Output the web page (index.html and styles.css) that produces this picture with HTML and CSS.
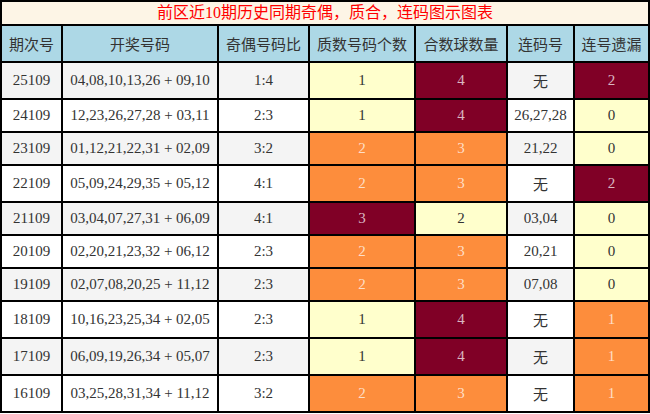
FILE: index.html
```html
<!DOCTYPE html>
<html lang="zh-CN">
<head>
<meta charset="utf-8">
<title>前区近10期历史同期奇偶，质合，连码图示图表</title>
<link rel="stylesheet" href="styles.css">
</head>
<body>
<table class="chart">
  <colgroup>
    <col class="c1"><col class="c2"><col class="c3"><col class="c4"><col class="c5"><col class="c6"><col class="c7">
  </colgroup>
  <thead>
    <tr><th class="title" colspan="7">前区近10期历史同期奇偶，质合，连码图示图表</th></tr>
    <tr class="head">
      <th>期次号</th><th>开奖号码</th><th>奇偶号码比</th><th>质数号码个数</th><th>合数球数量</th><th>连码号</th><th>连号遗漏</th>
    </tr>
  </thead>
  <tbody>
    <tr class="alt"><td>25109</td><td>04,08,10,13,26 + 09,10</td><td>1:4</td><td class="lo">1</td><td class="hi">4</td><td>无</td><td class="hi">2</td></tr>
    <tr><td>24109</td><td>12,23,26,27,28 + 03,11</td><td>2:3</td><td class="lo">1</td><td class="hi">4</td><td>26,27,28</td><td class="lo">0</td></tr>
    <tr class="alt"><td>23109</td><td>01,12,21,22,31 + 02,09</td><td>3:2</td><td class="mid">2</td><td class="mid">3</td><td>21,22</td><td class="lo">0</td></tr>
    <tr><td>22109</td><td>05,09,24,29,35 + 05,12</td><td>4:1</td><td class="mid">2</td><td class="mid">3</td><td>无</td><td class="hi">2</td></tr>
    <tr class="alt"><td>21109</td><td>03,04,07,27,31 + 06,09</td><td>4:1</td><td class="hi">3</td><td class="lo">2</td><td>03,04</td><td class="lo">0</td></tr>
    <tr><td>20109</td><td>02,20,21,23,32 + 06,12</td><td>2:3</td><td class="mid">2</td><td class="mid">3</td><td>20,21</td><td class="lo">0</td></tr>
    <tr class="alt"><td>19109</td><td>02,07,08,20,25 + 11,12</td><td>2:3</td><td class="mid">2</td><td class="mid">3</td><td>07,08</td><td class="lo">0</td></tr>
    <tr><td>18109</td><td>10,16,23,25,34 + 02,05</td><td>2:3</td><td class="lo">1</td><td class="hi">4</td><td>无</td><td class="mid">1</td></tr>
    <tr class="alt"><td>17109</td><td>06,09,19,26,34 + 05,07</td><td>2:3</td><td class="lo">1</td><td class="hi">4</td><td>无</td><td class="mid">1</td></tr>
    <tr><td>16109</td><td>03,25,28,31,34 + 11,12</td><td>3:2</td><td class="mid">2</td><td class="mid">3</td><td>无</td><td class="mid">1</td></tr>
  </tbody>
</table>
</body>
</html>
```

FILE: styles.css
```css
html, body {
  margin: 0;
  padding: 0;
  background: #ffffff;
}

.chart {
  width: 650px;
  table-layout: fixed;
  border-collapse: separate;
  border-spacing: 0;
  border-top: 2px solid #000;
  border-left: 2px solid #000;
  font-family: "Liberation Serif", "Noto Sans CJK SC", serif;
  font-size: 15px;
  color: #333333;
}

.c1 { width: 61px; }
.c2 { width: 156px; }
.c3 { width: 91px; }
.c4 { width: 106px; }
.c5 { width: 92px; }
.c6 { width: 67px; }
.c7 { width: 75px; }

.chart th,
.chart td {
  border-right: 2px solid #000;
  border-bottom: 2px solid #000;
  padding: 7px 0;
  text-align: center;
  white-space: nowrap;
  overflow: hidden;
}

.chart th {
  font-weight: normal;
}

.chart .title {
  background: #fdf5e6;
  color: #ff0000;
  font-size: 16px;
  line-height: 22px;
  padding: 0;
}

.head th {
  background: #add8e6;
  color: #333333;
}

tbody tr td {
  background: #ffffff;
}

tbody tr.alt td {
  background: #f4f4f4;
}

tbody tr td.lo {
  background: #ffffcc;
  color: #333333;
}

tbody tr td.mid {
  background: #fd8d3c;
  color: rgba(255, 255, 255, 0.72);
}

tbody tr td.hi {
  background: #800026;
  color: rgba(255, 255, 255, 0.72);
}
```
